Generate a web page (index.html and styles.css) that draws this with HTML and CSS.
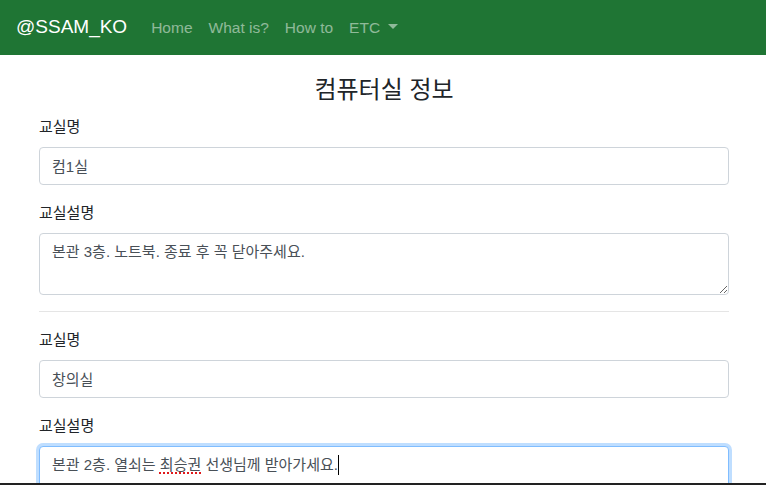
FILE: index.html
```html
<!DOCTYPE html>
<html lang="ko">
<head>
<meta charset="utf-8">
<title>컴퓨터실 정보</title>
<link rel="stylesheet" href="styles.css">
</head>
<body>
<nav class="navbar">
  <a class="brand" href="#">@SSAM_KO</a>
  <ul class="nav">
    <li><a href="#">Home</a></li>
    <li><a href="#">What is?</a></li>
    <li><a href="#">How to</a></li>
    <li><a href="#" class="dropdown-toggle">ETC</a></li>
  </ul>
</nav>
<main class="container">
  <h4 class="title">컴퓨터실 정보</h4>
  <section class="room">
    <div class="form-group">
      <label>교실명</label>
      <input class="form-control" type="text" value="컴1실">
    </div>
    <div class="form-group">
      <label>교실설명</label>
      <textarea class="form-control area" rows="2">본관 3층. 노트북. 종료 후 꼭 닫아주세요.</textarea>
    </div>
  </section>
  <hr class="sep">
  <section class="room">
    <div class="form-group">
      <label>교실명</label>
      <input class="form-control" type="text" value="창의실">
    </div>
    <div class="form-group">
      <label>교실설명</label>
      <div class="form-control area focused">본관 2층. 열쇠는 <span class="spell">최승권</span> 선생님께 받아가세요.<span class="caret"></span></div>
    </div>
  </section>
</main>
<div class="screen-edge"></div>
</body>
</html>
```
FILE: styles.css
```css
* { box-sizing: border-box; }
html, body { margin: 0; padding: 0; }
body {
  font-family: "Liberation Sans", "Noto Sans CJK KR", sans-serif;
  font-size: 16px;
  line-height: 1.5;
  color: #212529;
  background: #fff;
  overflow: hidden;
}
.navbar {
  display: flex;
  align-items: center;
  height: 55px;
  padding: 0 16px;
  background: #1f7534;
}
.brand {
  color: #fff;
  font-size: 19px;
  text-decoration: none;
  margin-right: 16px;
}
.nav {
  display: flex;
  list-style: none;
  margin: 0;
  padding: 0;
}
.nav a {
  display: block;
  padding: 8px 8px;
  color: rgba(255,255,255,.5);
  text-decoration: none;
  font-size: 15.5px;
}
.dropdown-toggle::after {
  content: "";
  display: inline-block;
  margin-left: 8px;
  vertical-align: .255em;
  border-top: 5px solid;
  border-right: 5px solid transparent;
  border-left: 5px solid transparent;
}
.container {
  padding: 0 37px 0 39px;
}
.title {
  margin: 21px 0 10px;
  text-align: center;
  font-size: 24px;
  font-weight: 400;
  line-height: 1.2;
}
.form-group { margin-bottom: 16px; }
label {
  display: block;
  margin-bottom: 8px;
  font-size: 15px;
  line-height: 24px;
}
.form-control {
  display: block;
  width: 100%;
  height: 38px;
  padding: 6px 12px;
  font-family: inherit;
  font-size: 15px;
  line-height: 24px;
  color: #495057;
  background: #fff;
  border: 1px solid #ced4da;
  border-radius: 4px;
  margin: 0;
}
.area {
  height: 62px;
  resize: vertical;
}
.focused {
  border-color: #80bdff;
  box-shadow: 0 0 0 3px rgba(0,123,255,.25);
  color: #495057;
}
.spell {
  text-decoration: underline dotted #e0191b;
  text-decoration-thickness: 2px;
  text-underline-offset: 3px;
}
.caret {
  display: inline-block;
  width: 1px;
  height: 20px;
  background: #000;
  vertical-align: -5px;
}
.sep {
  margin: 0 0 16px;
  border: 0;
  border-top: 1px solid rgba(0,0,0,.1);
}
.screen-edge {
  position: fixed;
  left: 0;
  right: 0;
  bottom: 0;
  height: 2px;
  background: #222;
}
```
